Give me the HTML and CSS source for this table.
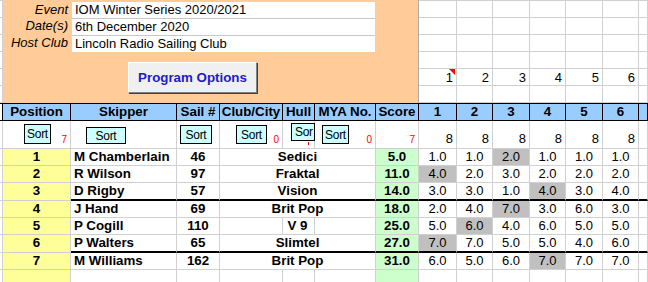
FILE: index.html
```html
<!DOCTYPE html>
<html>
<head>
<meta charset="utf-8">
<link rel="stylesheet" href="styles.css">
</head>
<body>
<div class="sheet">
  <div class="top">
    <div class="colA">
      <div class="g"></div><div class="g"></div><div class="g"></div><div class="g"></div><div class="g"></div><div class="g"></div>
    </div>
    <div class="panel">
      <div class="info">
        <div class="lbl">Event</div><div class="val">IOM Winter Series 2020/2021</div>
        <div class="lbl">Date(s)</div><div class="val sep">6th December 2020</div>
        <div class="lbl">Host Club</div><div class="val sep">Lincoln Radio Sailing Club</div>
      </div>
      <div class="prog">Program Options</div>
    </div>
    <div class="rtop">
      <div class="g"></div><div class="g"></div><div class="g"></div><div class="g"></div><div class="g"></div><div class="g"></div><div class="g"></div>
      <div class="g"></div><div class="g"></div><div class="g"></div><div class="g"></div><div class="g"></div><div class="g"></div><div class="g"></div>
      <div class="g"></div><div class="g"></div><div class="g"></div><div class="g"></div><div class="g"></div><div class="g"></div><div class="g"></div>
      <div class="g"></div><div class="g"></div><div class="g"></div><div class="g"></div><div class="g"></div><div class="g"></div><div class="g"></div>
      <div class="g n note">1</div><div class="g n">2</div><div class="g n">3</div><div class="g n">4</div><div class="g n">5</div><div class="g n">6</div><div class="g"></div>
      <div class="g"></div><div class="g"></div><div class="g"></div><div class="g"></div><div class="g"></div><div class="g"></div><div class="g"></div>
    </div>
  </div>

  <div class="row head">
    <div class="h a"></div>
    <div class="h">Position</div>
    <div class="h">Skipper</div>
    <div class="h">Sail #</div>
    <div class="h">Club/City</div>
    <div class="h">Hull</div>
    <div class="h">MYA No.</div>
    <div class="h">Score</div>
    <div class="h">1</div>
    <div class="h">2</div>
    <div class="h">3</div>
    <div class="h">4</div>
    <div class="h">5</div>
    <div class="h">6</div>
    <div class="h"></div>
  </div>

  <div class="row sortrow">
    <div class="c a"></div>
    <div class="c s"><span class="btn b-pos">Sort</span><span class="cnt">7</span></div>
    <div class="c s"><span class="btn b-skip">Sort</span></div>
    <div class="c s"><span class="btn b-sail">Sort</span></div>
    <div class="c s"><span class="btn b-club">Sort</span><span class="cnt">0</span></div>
    <div class="c s hullc"><span class="btn b-hull">Sor</span></div>
    <div class="c s"><span class="btn b-mya">Sort</span><span class="cnt">0</span></div>
    <div class="c s"><span class="cnt">7</span></div>
    <div class="c s"><span class="eight">8</span></div>
    <div class="c s"><span class="eight">8</span></div>
    <div class="c s"><span class="eight">8</span></div>
    <div class="c s"><span class="eight">8</span></div>
    <div class="c s"><span class="eight">8</span></div>
    <div class="c s"><span class="eight">8</span></div>
    <div class="c"></div>
  </div>

  <div class="row data">
    <div class="c a"></div><div class="c pos">1</div><div class="c skip">M Chamberlain</div><div class="c sail">46</div><div class="c boat">Sedici</div><div class="c score">5.0</div>
    <div class="c r">1.0</div><div class="c r">1.0</div><div class="c r d">2.0</div><div class="c r">1.0</div><div class="c r">1.0</div><div class="c r">1.0</div><div class="c"></div>
  </div>
  <div class="row data">
    <div class="c a"></div><div class="c pos">2</div><div class="c skip">R Wilson</div><div class="c sail">97</div><div class="c boat">Fraktal</div><div class="c score">11.0</div>
    <div class="c r d">4.0</div><div class="c r">2.0</div><div class="c r">3.0</div><div class="c r">2.0</div><div class="c r">2.0</div><div class="c r">2.0</div><div class="c"></div>
  </div>
  <div class="row data thick">
    <div class="c a"></div><div class="c pos">3</div><div class="c skip">D Rigby</div><div class="c sail">57</div><div class="c boat">Vision</div><div class="c score">14.0</div>
    <div class="c r">3.0</div><div class="c r">3.0</div><div class="c r">1.0</div><div class="c r d">4.0</div><div class="c r">3.0</div><div class="c r">4.0</div><div class="c"></div>
  </div>
  <div class="row data">
    <div class="c a"></div><div class="c pos">4</div><div class="c skip">J Hand</div><div class="c sail">69</div><div class="c boat">Brit Pop</div><div class="c score">18.0</div>
    <div class="c r">2.0</div><div class="c r">4.0</div><div class="c r d">7.0</div><div class="c r">3.0</div><div class="c r">6.0</div><div class="c r">3.0</div><div class="c"></div>
  </div>
  <div class="row data">
    <div class="c a"></div><div class="c pos">5</div><div class="c skip">P Cogill</div><div class="c sail">110</div><div class="c boat split">V 9</div><div class="c score">25.0</div>
    <div class="c r">5.0</div><div class="c r d">6.0</div><div class="c r">4.0</div><div class="c r">6.0</div><div class="c r">5.0</div><div class="c r">5.0</div><div class="c"></div>
  </div>
  <div class="row data thick">
    <div class="c a"></div><div class="c pos">6</div><div class="c skip">P Walters</div><div class="c sail">65</div><div class="c boat">Slimtel</div><div class="c score">27.0</div>
    <div class="c r d">7.0</div><div class="c r">7.0</div><div class="c r">5.0</div><div class="c r">5.0</div><div class="c r">4.0</div><div class="c r">6.0</div><div class="c"></div>
  </div>
  <div class="row data">
    <div class="c a"></div><div class="c pos">7</div><div class="c skip">M Williams</div><div class="c sail">162</div><div class="c boat">Brit Pop</div><div class="c score">31.0</div>
    <div class="c r">6.0</div><div class="c r">5.0</div><div class="c r">6.0</div><div class="c r d">7.0</div><div class="c r">7.0</div><div class="c r">7.0</div><div class="c"></div>
  </div>
  <div class="row data">
    <div class="c a"></div><div class="c pos"></div><div class="c"></div><div class="c"></div><div class="c"></div><div class="c"></div><div class="c"></div><div class="c score"></div>
    <div class="c"></div><div class="c"></div><div class="c"></div><div class="c"></div><div class="c"></div><div class="c"></div><div class="c"></div>
  </div>
</div>
</body>
</html>
```

FILE: styles.css
```css
* { box-sizing: border-box; }
html, body { margin: 0; padding: 0; background: #ffffff; }
body {
  font-family: "Liberation Sans", Arial, sans-serif;
  font-size: 13px;
  color: #000;
  width: 648px;
  height: 282px;
  overflow: hidden;
}
.sheet { width: 648px; }

/* top region */
.top { display: flex; height: 103px; }
.colA {
  width: 3px;
  display: grid;
  grid-template-rows: 1px repeat(6, 17px);
}
.colA::before { content: ""; border-bottom: 1px solid #d0d0d0; }
.colA .g { border-right: 1px solid #d0d0d0; border-bottom: 1px solid #d0d0d0; }

.panel {
  width: 416px;
  background: #ffcc99;
  border-right: 1px solid #a8a8a8;
  display: flex;
  flex-direction: column;
  align-items: flex-start;
  padding-top: 2px;
}
.info {
  display: grid;
  grid-template-columns: 69px 303px;
  grid-template-rows: 16px 17px 17px;
}
.lbl {
  font-style: italic;
  text-align: right;
  padding-right: 4px;
  line-height: 16px;
}
.val {
  background: #fff;
  padding-left: 3px;
  line-height: 16px;
}
.val.sep { border-top: 1px solid #c8c8c8; }

.prog {
  margin-top: 10px;
  margin-left: 125px;
  width: 129px;
  height: 31px;
  background: #f0f0f0;
  border: 1px solid;
  border-color: #ffffff #808080 #808080 #ffffff;
  box-shadow: 1px 1px 0 #404040;
  color: #1c1cc8;
  font-weight: bold;
  font-size: 13.33px;
  display: flex;
  align-items: center;
  justify-content: center;
}

.rtop {
  flex: 1;
  display: grid;
  grid-template-columns: 38px 36px 37px 36px 37px 36px 1fr;
  grid-template-rows: repeat(6, 17px);
  border-top: 1px solid #d0d0d0;
}
.rtop .g { border-right: 1px solid #d0d0d0; border-bottom: 1px solid #d0d0d0; }
.rtop .n {
  text-align: right;
  padding-right: 3px;
  line-height: 16px;
  padding-top: 1px;
}
.note { position: relative; }
.note::after {
  content: "";
  position: absolute;
  top: 0;
  right: 1px;
  border-top: 6px solid #ff0000;
  border-left: 6px solid transparent;
}

/* table rows */
.row {
  display: grid;
  grid-template-columns: 3px 68px 106px 43px 63px 32px 61px 43px 38px 36px 37px 36px 37px 36px 1fr;
}
.head {
  height: 18px;
  background: #99ccff;
  border-top: 1px solid #000;
  border-bottom: 1px solid #000;
}
.h {
  border-right: 1px solid #000;
  font-weight: bold;
  font-size: 13.33px;
  text-align: center;
  line-height: 16px;
  white-space: nowrap;
}
.h.a { background: #fff; border-right: 1px solid #000; }

.c {
  border-right: 1px solid #d0d0d0;
  border-bottom: 1px solid #d0d0d0;
  white-space: nowrap;
}
.sortrow { height: 28px; }
.sortrow .c { height: 28px; }
.s {
  position: relative;
  display: flex;
  justify-content: flex-end;
  align-items: flex-end;
  padding: 0 3px 2px 0;
}
.cnt { color: #ff0000; font-size: 10px; line-height: 12px; }
.eight { font-size: 13px; line-height: 15px; padding-bottom: 0; }
.hullc::after {
  content: "";
  position: absolute;
  left: 25px;
  top: 21px;
  width: 1px;
  height: 3px;
  background: #ff0000;
}
.btn {
  position: absolute;
  background: #ccffff;
  border: 1px solid #000;
  font-size: 12px;
  letter-spacing: -0.3px;
  display: flex;
  align-items: center;
  justify-content: center;
  overflow: hidden;
}
.b-pos { left: 21px; top: 3px; width: 27px; height: 20px; }
.b-skip { left: 15px; top: 6px; width: 40px; height: 17px; }
.b-sail { left: 3px; top: 4px; width: 32px; height: 19px; }
.b-club { left: 16px; top: 4px; width: 31px; height: 19px; }
.b-hull { left: 8px; top: 2px; width: 24px; height: 18px; justify-content: flex-start; padding-left: 3px; }
.b-mya { left: 7px; top: 4px; width: 27px; height: 19px; }

.data { height: 17px; }
.data .c { height: 17px; line-height: 16px; }
.pos { background: #ffff99; font-weight: bold; font-size: 13.33px; text-align: center; }
.skip { font-weight: bold; font-size: 13.33px; padding-left: 3px; }
.sail { font-weight: bold; font-size: 13.33px; text-align: center; }
.boat { grid-column: span 3; font-weight: bold; font-size: 13.33px; text-align: center; }
.boat.split {
  background:
    linear-gradient(#d0d0d0, #d0d0d0) 62px 0 / 1px 100% no-repeat,
    linear-gradient(#d0d0d0, #d0d0d0) 94px 0 / 1px 100% no-repeat;
}
.score { background: #ccffcc; font-weight: bold; font-size: 13.33px; text-align: center; }
.r { text-align: center; }
.r.d { background: #c0c0c0; }

.thick { height: 18px; }
.thick .c { height: 18px; }
.thick .c:not(.a):not(.pos) { border-bottom: 2px solid #000; }
```
